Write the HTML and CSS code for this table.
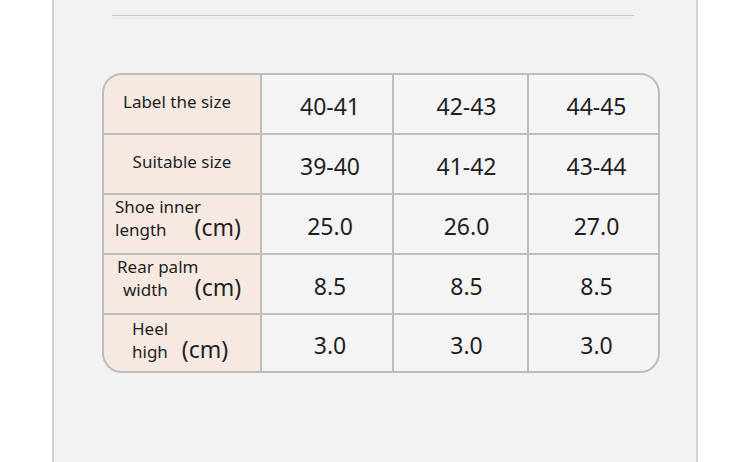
FILE: index.html
```html
<!DOCTYPE html>
<html lang="en">
<head>
    <meta charset="UTF-8">
    <meta name="viewport" content="width=device-width, initial-scale=1.0">
    <title>Size chart</title>
    <link rel="stylesheet" href="styles.css">
</head>
<body>

    <div class="panel">
        <div class="rule"></div>

        <div class="size-table">
            <div class="cell head lead">Label the size</div>
            <div class="cell c2">40-41</div>
            <div class="cell c3">42-43</div>
            <div class="cell c4">44-45</div>

            <div class="cell head">Suitable size</div>
            <div class="cell c2">39-40</div>
            <div class="cell c3">41-42</div>
            <div class="cell c4">43-44</div>

            <div class="cell head multi">
                <div class="stack inner">
                    <span>Shoe inner</span>
                    <span class="line">length<b class="unit gap-l">(cm)</b></span>
                </div>
            </div>
            <div class="cell c2">25.0</div>
            <div class="cell c3">26.0</div>
            <div class="cell c4">27.0</div>

            <div class="cell head multi">
                <div class="stack palm">
                    <span>Rear palm</span>
                    <span class="line indent">width<b class="unit gap-m">(cm)</b></span>
                </div>
            </div>
            <div class="cell c2">8.5</div>
            <div class="cell c3">8.5</div>
            <div class="cell c4">8.5</div>

            <div class="cell head multi low">
                <div class="stack heel">
                    <span>Heel</span>
                    <span class="line">high<b class="unit gap-s">(cm)</b></span>
                </div>
            </div>
            <div class="cell c2">3.0</div>
            <div class="cell c3">3.0</div>
            <div class="cell c4">3.0</div>
        </div>
    </div>

</body>
</html>
```

FILE: styles.css
```css
* { margin: 0; padding: 0; box-sizing: border-box; }
body { background: #fff; font-family: "Noto Sans", "Noto Sans CJK SC", sans-serif; color: #1f1f1f; }

.panel {
    margin: 0 52px; height: 462px; background: #f2f2f2;
    border-left: 2px solid #d2d2d2; border-right: 2px solid #d2d2d2;
    padding: 15px 0 0 48px;
}
.rule { width: 522px; height: 1px; background: #c6c6c6; margin-left: 10px; box-shadow: 0 3px 0 #e9e9e9; }

.size-table {
    display: grid;
    grid-template-columns: 156px 130px 133px 129px;
    grid-template-rows: repeat(4, 58px) 56px;
    gap: 2px;
    width: 558px; margin-top: 57px;
    background: #bdbdbd; border: 2px solid #bdbdbd; border-radius: 20px;
    overflow: hidden;
}
.cell {
    background: #f4f4f4; display: flex; align-items: center; justify-content: center;
    font-size: 23px; padding-top: 4px;
}
.c2 { padding-left: 6px; }
.c3 { padding-left: 12px; }
.c4 { padding-left: 6px; }

.head { background: #f6e9e2; font-size: 17px; padding: 0 0 6px 0; }
.lead { padding-right: 10px; }
.multi { justify-content: flex-start; align-items: flex-start; padding: 1px 0 0 0; }
.low { padding-top: 3px; }

.stack { display: flex; flex-direction: column; line-height: 21px; }
.stack .line { display: flex; align-items: baseline; }
.stack .indent { padding-left: 6px; }
.unit { font-weight: normal; font-size: 23px; line-height: 21px; }
.gap-l { margin-left: 28px; }
.gap-m { margin-left: 27px; }
.gap-s { margin-left: 14px; }

.inner { margin-left: 11px; }
.palm { margin-left: 13px; }
.heel { margin-left: 28px; }
```
